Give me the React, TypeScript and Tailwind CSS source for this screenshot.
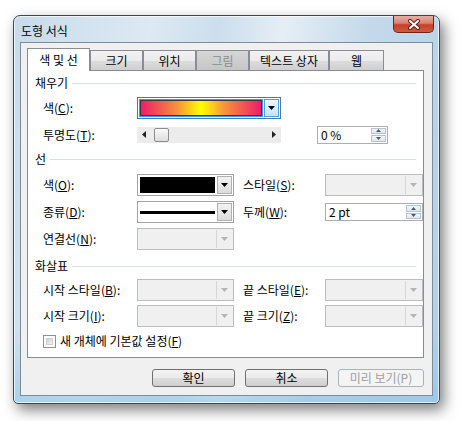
import React from "react";

const Tri = ({ color = "#000" }: { color?: string }) => (
  <svg width="7" height="4" viewBox="0 0 7 4">
    <polygon points="0,0 7,0 3.5,4" fill={color} />
  </svg>
);

function DropBtn({ disabled, focused }: { disabled?: boolean; focused?: boolean }) {
  if (disabled) {
    return (
      <div className="w-[16px] h-full border-l border-[#d6d6d6] flex items-center justify-center bg-[#f0f0f0]">
        <Tri color="#b4b4b4" />
      </div>
    );
  }
  return (
    <div
      className={
        "w-[15px] h-full flex items-center justify-center border " +
        (focused
          ? "border-[#5e9ad0] bg-[linear-gradient(#eaf6fd,#bee6fd)]"
          : "border-[#b1b1b1] bg-[linear-gradient(#f3f3f3,#dcdcdc)]")
      }
    >
      <Tri />
    </div>
  );
}

function Combo({
  w,
  disabled,
  focused,
  children,
}: {
  w: string;
  disabled?: boolean;
  focused?: boolean;
  children?: React.ReactNode;
}) {
  if (disabled) {
    return (
      <div className={w + " h-[22px] border border-[#b9bcc0] bg-[#f0f0f0] flex p-[1px]"}>
        <div className="flex-1" />
        <DropBtn disabled />
      </div>
    );
  }
  return (
    <div
      className={
        w +
        " h-[22px] border bg-white flex p-[1px] gap-[1px] " +
        (focused ? "border-[#3c7fb1]" : "border-[#a3a3a3]")
      }
    >
      <div className="flex-1 p-[1px] flex items-center">{children}</div>
      <DropBtn focused={focused} />
    </div>
  );
}

function Spin({ w, text }: { w: string; text: string }) {
  return (
    <div className={w + " h-[18px] border border-[#abadb3] bg-white flex items-center pl-[3px] pr-[1px]"}>
      <span className="flex-1 text-[12px] leading-none">{text}</span>
      <div className="w-[15px] h-[14px] flex flex-col gap-[1px]">
        <div className="flex-1 border border-[#b6c2cf] bg-[linear-gradient(#f4f7fa,#dfe6ee)] flex items-center justify-center">
          <svg width="5" height="3" viewBox="0 0 5 3">
            <polygon points="0,3 5,3 2.5,0" fill="#4a5a6a" />
          </svg>
        </div>
        <div className="flex-1 border border-[#b6c2cf] bg-[linear-gradient(#f4f7fa,#dfe6ee)] flex items-center justify-center">
          <svg width="5" height="3" viewBox="0 0 5 3">
            <polygon points="0,0 5,0 2.5,3" fill="#4a5a6a" />
          </svg>
        </div>
      </div>
    </div>
  );
}

function Section({ title, mt }: { title: string; mt: string }) {
  return (
    <div className={"flex items-center h-[16px] pl-[7px] pr-[7px] gap-[4px] " + mt}>
      <span className="leading-none">{title}</span>
      <div className="flex-1 h-px bg-[#d5dfe5]" />
    </div>
  );
}

function Row({
  mt,
  h = "h-[22px]",
  label,
  children,
}: {
  mt: string;
  h?: string;
  label: React.ReactNode;
  children: React.ReactNode;
}) {
  return (
    <div className={"flex items-center pl-[15px] " + mt + " " + h}>
      <div className="w-[94px] leading-none">{label}</div>
      {children}
    </div>
  );
}

function RightLabel({ children }: { children: React.ReactNode }) {
  return <div className="w-[82px] ml-[9px] leading-none">{children}</div>;
}

function Btn({ children, disabled, w }: { children: React.ReactNode; disabled?: boolean; w: string }) {
  return (
    <div
      className={
        w +
        " h-[18px] rounded-[3px] border flex items-center justify-center leading-none " +
        (disabled
          ? "border-[#adb2b5] bg-[#f4f4f4] text-[#a0a0a0]"
          : "border-[#707070] bg-[linear-gradient(#f2f2f2_0%,#ebebeb_50%,#dddddd_51%,#cfcfcf_100%)] text-black")
      }
    >
      {children}
    </div>
  );
}

function Tab({ children, w, selected, disabled }: { children: React.ReactNode; w: string; selected?: boolean; disabled?: boolean }) {
  if (selected) {
    return (
      <div className={w + " h-[23px] -mb-px relative z-10 border border-b-0 border-[#898c95] bg-white flex items-center justify-center leading-none"}>
        {children}
      </div>
    );
  }
  return (
    <div
      className={
        w +
        " h-[20px] border border-b-0 border-[#898c95] flex items-center justify-center leading-none " +
        (disabled
          ? "bg-[linear-gradient(#d6d6d6,#c6c6c6)] text-[#8d8d8d]"
          : "bg-[linear-gradient(#f2f2f2_0%,#ebebeb_50%,#dddddd_51%,#cfcfcf_100%)]")
      }
    >
      {children}
    </div>
  );
}

export default function App() {
  return (
    <div className="w-[460px] h-[421px] bg-white overflow-hidden text-[12px] text-black [font-family:'Noto_Sans_CJK_KR','Noto_Sans',sans-serif]">
      <div className="pt-[15px] pl-[13px]">
        <div className="w-[427px] h-[389px] rounded-t-[7px] rounded-b-[5px] border border-[#3c4650] shadow-[4px_6px_14px_rgba(0,0,0,0.5),inset_0_0_0_1px_rgba(255,255,255,0.7)] bg-[linear-gradient(180deg,rgba(255,255,255,0)_0%,rgba(255,255,255,0)_80%,rgba(140,195,232,0.55)_100%),linear-gradient(100deg,#c7dbeb_0%,#dde9f3_28%,#cbdeed_42%,#e6eef5_55%,#c4daeb_72%,#b4cfe6_100%)] flex flex-col px-[6px] pb-[7px]">
          <div className="h-[26px] flex items-start justify-between">
            <span className="pl-[1px] pt-[9px] leading-none text-[12px]">도형 서식</span>
            <div className="w-[41px] h-[17px] -mr-[1px] border border-t-0 border-[#6e2419] rounded-b-[5px] bg-[linear-gradient(#e6b1a6_0%,#d9826f_45%,#c6402a_55%,#cf5a3f_100%)] flex items-center justify-center">
              <svg width="14" height="11" viewBox="0 0 14 11">
                <path d="M3 2 L11 9 M11 2 L3 9" stroke="#5a2018" strokeWidth="4" strokeLinecap="round" />
                <path d="M3 2 L11 9 M11 2 L3 9" stroke="#ffffff" strokeWidth="2" strokeLinecap="round" />
              </svg>
            </div>
          </div>
          <div className="flex-1 bg-[#f0f0f0] border border-[#7c8c9c] flex flex-col pl-[6px] pr-[8px] pt-[4px]">
            <div className="flex items-end h-[23px]">
              <Tab w="w-[63px]" selected>
                색 및 선
              </Tab>
              <Tab w="w-[53px]">크기</Tab>
              <Tab w="w-[53px]">위치</Tab>
              <Tab w="w-[53px]" disabled>
                그림
              </Tab>
              <Tab w="w-[80px]">텍스트 상자</Tab>
              <Tab w="w-[55px]">웹</Tab>
            </div>
            <div className="h-[288px] border border-[#898c95] bg-white flex flex-col">
              <Section title="채우기" mt="mt-[4px]" />
              <Row mt="mt-[6px]" label={<>색(<u>C</u>):</>}>
                <Combo w="w-[144px]" focused>
                  <div className="w-full h-full border border-[#3a3a3a] bg-[linear-gradient(90deg,#ee1c6a_0%,#f7913a_30%,#ffff00_50%,#f7913a_70%,#ee1c6a_100%)] outline outline-1 outline-[#3399ff]" />
                </Combo>
              </Row>
              <Row mt="mt-[7px]" h="h-[17px]" label={<>투명도(<u>T</u>):</>}>
                <div className="w-[144px] h-[16px] bg-[#ececec] flex items-center px-[5px]">
                  <svg width="4" height="7" viewBox="0 0 4 7">
                    <polygon points="4,0 4,7 0,3.5" fill="#222" />
                  </svg>
                  <div className="ml-[8px] w-[15px] h-[14px] rounded-[2px] border border-[#8d8d8d] bg-[linear-gradient(#fafafa,#dcdcdc)]" />
                  <div className="flex-1" />
                  <svg width="4" height="7" viewBox="0 0 4 7">
                    <polygon points="0,0 0,7 4,3.5" fill="#222" />
                  </svg>
                </div>
                <div className="ml-[36px]">
                  <Spin w="w-[71px]" text="0 %" />
                </div>
              </Row>
              <Section title="선" mt="mt-[8px]" />
              <Row mt="mt-[7px]" label={<>색(<u>O</u>):</>}>
                <Combo w="w-[97px]">
                  <div className="w-full h-full bg-black" />
                </Combo>
                <RightLabel>
                  스타일(<u>S</u>):
                </RightLabel>
                <Combo w="w-[98px]" disabled />
              </Row>
              <Row mt="mt-[5px]" label={<>종류(<u>D</u>):</>}>
                <Combo w="w-[97px]">
                  <div className="w-full h-[3px] bg-black" />
                </Combo>
                <RightLabel>
                  두께(<u>W</u>):
                </RightLabel>
                <Spin w="w-[98px]" text="2 pt" />
              </Row>
              <Row mt="mt-[5px]" label={<>연결선(<u>N</u>):</>}>
                <Combo w="w-[97px]" disabled />
              </Row>
              <Section title="화살표" mt="mt-[8px]" />
              <Row mt="mt-[5px]" label={<>시작 스타일(<u>B</u>):</>}>
                <Combo w="w-[97px]" disabled />
                <RightLabel>
                  끝 스타일(<u>E</u>):
                </RightLabel>
                <Combo w="w-[98px]" disabled />
              </Row>
              <Row mt="mt-[4px]" label={<>시작 크기(<u>I</u>):</>}>
                <Combo w="w-[97px]" disabled />
                <RightLabel>
                  끝 크기(<u>Z</u>):
                </RightLabel>
                <Combo w="w-[98px]" disabled />
              </Row>
              <div className="flex items-center pl-[15px] mt-[6px] h-[16px] gap-[4px]">
                <div className="w-[13px] h-[13px] border border-[#8f8f8f] bg-white p-[2px]">
                  <div className="w-full h-full bg-[linear-gradient(135deg,#cbcfd5,#f4f4f4)] border border-[#d0d0d0]" />
                </div>
                <span className="leading-none">새 개체에 기본값 설정(<u>F</u>)</span>
              </div>
            </div>
            <div className="flex justify-end gap-[10px] mt-[11px]">
              <Btn w="w-[83px]">확인</Btn>
              <Btn w="w-[83px]">취소</Btn>
              <Btn w="w-[86px]" disabled>
                미리 보기(P)
              </Btn>
            </div>
          </div>
        </div>
      </div>
    </div>
  );
}
